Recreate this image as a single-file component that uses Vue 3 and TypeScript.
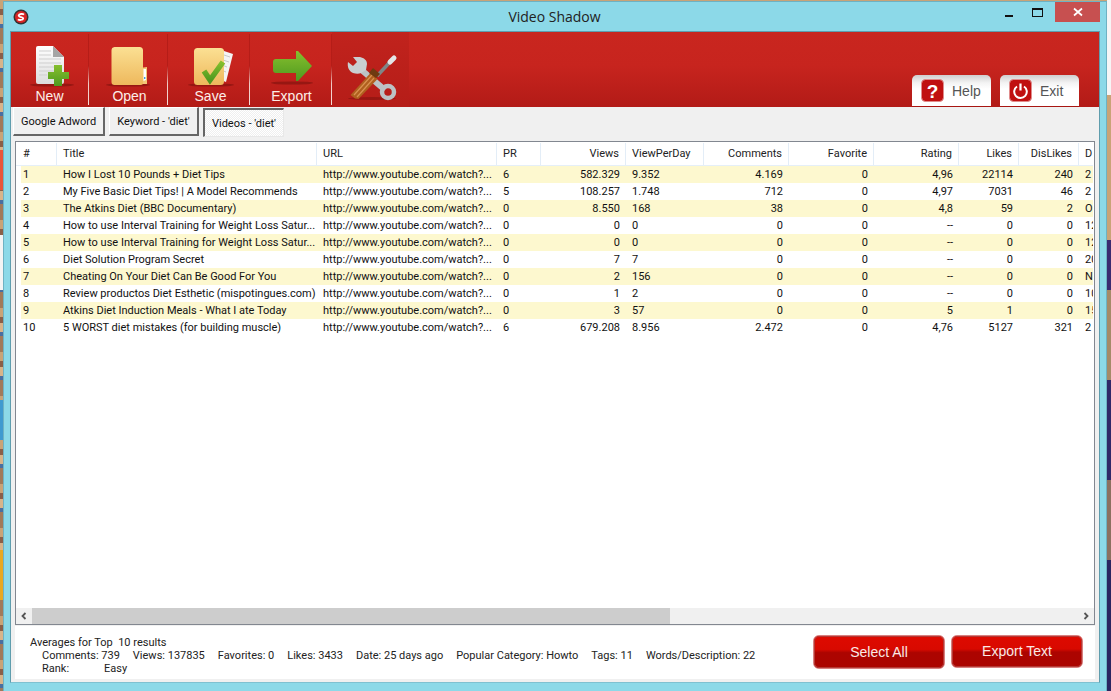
<script setup lang="ts">
interface Row {
  n: number; title: string; pr: number; views: string; vpd: string; comments: string;
  fav: string; rating: string; likes: string; dislikes: string; d: string;
}
const url = 'http://www.youtube.com/watch?...'
const rows: Row[] = [
  { n: 1, title: 'How I Lost 10 Pounds + Diet Tips', pr: 6, views: '582.329', vpd: '9.352', comments: '4.169', fav: '0', rating: '4,96', likes: '22114', dislikes: '240', d: '2' },
  { n: 2, title: 'My Five Basic Diet Tips! | A Model Recommends', pr: 5, views: '108.257', vpd: '1.748', comments: '712', fav: '0', rating: '4,97', likes: '7031', dislikes: '46', d: '2' },
  { n: 3, title: 'The Atkins Diet (BBC Documentary)', pr: 0, views: '8.550', vpd: '168', comments: '38', fav: '0', rating: '4,8', likes: '59', dislikes: '2', d: 'O' },
  { n: 4, title: 'How to use Interval Training for Weight Loss Satur...', pr: 0, views: '0', vpd: '0', comments: '0', fav: '0', rating: '--', likes: '0', dislikes: '0', d: '12' },
  { n: 5, title: 'How to use Interval Training for Weight Loss Satur...', pr: 0, views: '0', vpd: '0', comments: '0', fav: '0', rating: '--', likes: '0', dislikes: '0', d: '12' },
  { n: 6, title: 'Diet Solution Program Secret', pr: 0, views: '7', vpd: '7', comments: '0', fav: '0', rating: '--', likes: '0', dislikes: '0', d: '20' },
  { n: 7, title: 'Cheating On Your Diet Can Be Good For You', pr: 0, views: '2', vpd: '156', comments: '0', fav: '0', rating: '--', likes: '0', dislikes: '0', d: 'N' },
  { n: 8, title: 'Review productos Diet Esthetic (mispotingues.com)', pr: 0, views: '1', vpd: '2', comments: '0', fav: '0', rating: '--', likes: '0', dislikes: '0', d: '10' },
  { n: 9, title: 'Atkins Diet Induction Meals - What I ate Today', pr: 0, views: '3', vpd: '57', comments: '0', fav: '0', rating: '5', likes: '1', dislikes: '0', d: '15' },
  { n: 10, title: '5 WORST diet mistakes (for building muscle)', pr: 6, views: '679.208', vpd: '8.956', comments: '2.472', fav: '0', rating: '4,76', likes: '5127', dislikes: '321', d: '2' },
]
</script>

<template>
  <div class="desktop">
    <div class="window">
      <div class="titlebar">
        <svg class="app-icon" width="16" height="16" viewBox="0 0 16 16">
          <circle cx="8" cy="8" r="7.5" fill="#333" />
          <circle cx="8" cy="8" r="6" fill="#d92525" />
          <path d="M11 5.600C10 4.700 6 4.600 5.700 6.500c-.3 2 4.800 1.200 4.500 3.100-.3 1.800-4.300 1.600-5.300.7" fill="none" stroke="#fff" stroke-width="1.800" />
        </svg>
        <span class="title">Video Shadow</span>
        <div class="controls">
          <span class="ctl-min"></span>
          <span class="ctl-max"></span>
          <span class="ctl-close">
            <svg width="10" height="10" viewBox="0 0 10 10"><path d="M1 1.500l8 7M9 1.500l-8 7" stroke="#fff" stroke-width="1.700" /></svg>
          </span>
        </div>
      </div>

      <div class="client">
        <header class="ribbon">
          <div class="tools">
            <button class="tool tool-new">
              <svg width="78" height="44" viewBox="11 44 78 44">
                <defs>
                  <linearGradient id="pg" x1="0" y1="0" x2="0" y2="1"><stop offset="0" stop-color="#fff"/><stop offset="1" stop-color="#dcdcdc"/></linearGradient>
                  <linearGradient id="gg" x1="0" y1="0" x2="0" y2="1"><stop offset="0" stop-color="#86bf2e"/><stop offset="1" stop-color="#4f9a1f"/></linearGradient>
                  <linearGradient id="fg" x1="0" y1="0" x2="0" y2="1"><stop offset="0" stop-color="#fbe093"/><stop offset="1" stop-color="#eeb85c"/></linearGradient>
                </defs>
                <ellipse cx="52" cy="85" rx="22" ry="1.600" fill="#8a1410" opacity=".75"/>
                <path d="M38 46h15l11 11v25a2 2 0 0 1-2 2H38a2 2 0 0 1-2-2V48a2 2 0 0 1 2-2z" fill="url(#pg)"/>
                <path d="M53 46l11 11H53z" fill="#a5a5a5"/>
                <path d="M39 51h12M39 55h12M39 59h22M39 63h22M39 67h22M39 71h22M39 75h8" stroke="#cfcfcf" stroke-width="1"/>
                <path d="M54 65h8v7h7v7h-7v7h-8v-7h-6v-7h6z" fill="url(#gg)"/>
              </svg>
              <span>New</span>
            </button>
            <button class="tool tool-open">
              <svg width="79" height="44" viewBox="89 44 79 44">
                <ellipse cx="128" cy="85" rx="22" ry="1.600" fill="#8a1410" opacity=".75"/>
                <path d="M140 68l7-1v17h-7z" fill="#f3c878"/>
                <path d="M143.500 69h2.500v11l-2.500 1z" fill="#fff"/>
                <path d="M114.500 47h25a3.500 3.500 0 0 1 3.500 3.500V83a2 2 0 0 1-2 2h-26.500a3 3 0 0 1-3-3V50.500a3.500 3.500 0 0 1 3-3.500z" fill="url(#fg)"/>
                <rect x="144" y="77" width="1.400" height="2" fill="#3e9be0"/>
              </svg>
              <span>Open</span>
            </button>
            <button class="tool tool-save">
              <svg width="82" height="44" viewBox="168 44 82 44">
                <ellipse cx="211" cy="85" rx="23" ry="1.600" fill="#8a1410" opacity=".75"/>
                <path d="M224 51l9 3-7 28-5-2z" fill="#f4f4f4"/>
                <path d="M224 55l6 2M223 60l6 2M222 65l5 2M221 70l5 2" stroke="#c8c8c8" stroke-width="1"/>
                <rect x="194" y="48" width="30" height="37" rx="3.500" fill="url(#fg)"/>
                <path d="M204 71l6 9 13-18" fill="none" stroke="url(#gg)" stroke-width="5.500"/>
              </svg>
              <span>Save</span>
            </button>
            <button class="tool tool-export">
              <svg width="82" height="44" viewBox="250 44 82 44">
                <ellipse cx="292" cy="83" rx="21" ry="1.600" fill="#8a1410" opacity=".75"/>
                <path d="M276 59h20v-8l2 0 14 15-14 15h-2v-8h-20a3 3 0 0 1-3-3V62a3 3 0 0 1 3-3z" fill="url(#gg)"/>
              </svg>
              <span>Export</span>
            </button>
            <button class="tool tool-wrench">
              <svg width="77" height="64" viewBox="332 44 77 64">
                <ellipse cx="372" cy="98.500" rx="24" ry="1.400" fill="#8a1410" opacity=".7"/>
                <path d="M358 67l27 23" fill="none" stroke="#bcc3c5" stroke-width="6"/>
                <path d="M360 57l-7 0 4 5-4 4-5-4c-1 5 1 9 5 11 3 1 6 1 8 0l5-3 1-6c0-4-3-6-7-7z" fill="#c9cfd1"/>
                <circle cx="388" cy="92" r="6" fill="none" stroke="#bcc2c4" stroke-width="4.500"/>
                <path d="M377 76l14-15" stroke="#7f8688" stroke-width="3.500"/>
                <path d="M390 62l4-4" stroke="#e3e6e7" stroke-width="5" stroke-linecap="round"/>
                <path d="M355 98.500l-4.500-3.500 20-22 7 6-19 20z" fill="#b0601f"/>
                <path d="M354 95l18-20M357 97l17-19" stroke="#d99250" stroke-width="1.200"/>
                <path d="M369 73l4-5 7 6-4 4z" fill="#6f3a10"/>
              </svg>
            </button>
          </div>
          <div class="top-actions">
            <button class="top-btn">
              <span class="badge">
                <svg width="23" height="23" viewBox="0 0 23 23"><rect x=".5" y=".5" width="22" height="22" rx="4" fill="#c01010" stroke="#e08c8c"/><text x="11.500" y="18.500" text-anchor="middle" class="q">?</text></svg>
              </span>
              <span>Help</span>
            </button>
            <button class="top-btn">
              <span class="badge">
                <svg width="23" height="23" viewBox="0 0 23 23"><rect x=".5" y=".5" width="22" height="22" rx="4" fill="#c01010" stroke="#e08c8c"/><path d="M8 7.500a6.300 6.300 0 1 0 7 0" fill="none" stroke="#fff" stroke-width="2"/><path d="M11.500 4.500v7" stroke="#fff" stroke-width="2.200"/></svg>
              </span>
              <span>Exit</span>
            </button>
          </div>
        </header>

        <nav class="tabs">
          <button class="tab tab-a">Google Adword</button>
          <button class="tab tab-b">Keyword - 'diet'</button>
          <button class="tab active">Videos - 'diet'</button>
        </nav>

        <section class="list">
          <div class="grid-wrap">
            <div class="row head">
              <div class="l">#</div><div class="l">Title</div><div class="l">URL</div><div class="l">PR</div>
              <div class="r">Views</div><div class="l">ViewPerDay</div><div class="r">Comments</div>
              <div class="r">Favorite</div><div class="r">Rating</div><div class="r">Likes</div>
              <div class="r">DisLikes</div><div class="l">D</div>
            </div>
            <div v-for="row in rows" :key="row.n" class="row body">
              <div class="l">{{ row.n }}</div><div class="l">{{ row.title }}</div><div class="l">{{ url }}</div>
              <div class="l">{{ row.pr }}</div><div class="r">{{ row.views }}</div><div class="l">{{ row.vpd }}</div>
              <div class="r">{{ row.comments }}</div><div class="r">{{ row.fav }}</div><div class="r">{{ row.rating }}</div>
              <div class="r">{{ row.likes }}</div><div class="r">{{ row.dislikes }}</div><div class="l">{{ row.d }}</div>
            </div>
          </div>
          <div class="hscroll">
            <span class="arrow"><svg width="8" height="8" viewBox="0 0 8 8"><path d="M5.500 1L2.500 4l3 3" fill="none" stroke="#555" stroke-width="1.800"/></svg></span>
            <div class="track"><div class="thumb"></div></div>
            <span class="arrow"><svg width="8" height="8" viewBox="0 0 8 8"><path d="M2.500 1l3 3-3 3" fill="none" stroke="#555" stroke-width="1.800"/></svg></span>
          </div>
        </section>

        <footer class="status">
          <div class="summary">
            <div>Averages for Top&nbsp; 10 results</div>
            <div class="stats">
              <span>Comments: 739</span><span>Views: 137835</span><span>Favorites: 0</span><span>Likes: 3433</span>
              <span>Date: 25 days ago</span><span>Popular Category: Howto</span><span>Tags: 11</span><span>Words/Description: 22</span>
            </div>
            <div class="rank"><span class="rank-k">Rank:</span><span>Easy</span></div>
          </div>
          <div class="actions">
            <button class="red-btn">Select All</button>
            <button class="red-btn second">Export Text</button>
          </div>
        </footer>
      </div>
    </div>
  </div>
</template>

<style>
html, body { margin: 0; padding: 0; background: #8a6a4a; }
</style>

<style scoped>
.desktop {
  width: 1111px; height: 691px; overflow: hidden; box-sizing: border-box;
  padding: 1px 3px 0 3px;
  font-family: Roboto, "Liberation Sans", Arial, sans-serif;
  background:
    linear-gradient(180deg, #f6f6f6 0 95px, #c9a377 95px 240px, #3a2a70 240px 290px, #a58a68 290px 380px, #2f2868 380px 480px, #8b7060 480px 560px, #2a2560 560px) right top / 4px 100% no-repeat,
    linear-gradient(180deg, transparent 0 150px, #e8553a 150px 190px, transparent 190px 235px, #f4f4f4 235px 290px, transparent 290px 400px, #3f9ad0 400px 440px, transparent 440px 550px, #e8a820 550px 600px, transparent 600px) left top / 3px 100% no-repeat,
    repeating-linear-gradient(180deg, #c9a377 0 9px, #8a5f48 9px 15px, #d8b48a 15px 24px, #4a6fa0 24px 28px, #a17a5a 28px 44px);
}
.window {
  width: 1104px; height: 690px; box-sizing: border-box;
  background: #8cd9e8; border: 1px solid #6eb2c3; border-bottom: 0;
  display: flex; flex-direction: column; padding: 0 6px 8px 6px;
}
.titlebar { height: 29px; flex: none; position: relative; display: flex; align-items: center; margin: 0 -6px; }
.app-icon { position: absolute; left: 9px; top: 7px; }
.title { flex: 1; text-align: center; font: 14px "Open Sans", sans-serif; color: #222; margin-top: -1px; margin-right: 1px; }
.controls { position: absolute; right: 6px; top: 0; height: 20px; display: flex; align-items: flex-start; }
.ctl-min { width: 8px; height: 2px; background: #111; margin: 13px 19px 0 0; }
.ctl-max { width: 9px; height: 6px; border: 1px solid #111; border-top-width: 2px; margin: 6px 12px 0 0; }
.ctl-close { width: 45px; height: 20px; background: #c75050; display: flex; align-items: center; justify-content: center; }
.client {
  flex: 1; display: flex; flex-direction: column; background: #f0f0f0;
  border: 1px solid #5f9dad; border-bottom-color: #7fc1d1; min-height: 0;
}
.ribbon {
  height: 75px; flex: none; display: flex; justify-content: space-between;
  background: linear-gradient(180deg, #c9261f 0%, #c7241e 45%, #b21b17 100%);
}
.tools { display: flex; height: 75px; }
.tool {
  all: unset; box-sizing: border-box; height: 75px; padding-top: 12px;
  display: flex; flex-direction: column; align-items: center;
  font-family: "Liberation Sans", Arial, sans-serif;
  color: #fdeee8; font-size: 14px; line-height: 16px; position: relative;
}
.tool svg { display: block; flex: none; }
.tool::after {
  content: ""; position: absolute; right: 0; top: 2px; bottom: 2px; width: 1px;
  background: linear-gradient(180deg, #b51d18 0%, #b51d18 45%, #f0c9c4 70%, #f6dcd8 100%);
}
.tool-new { width: 78px; }
.tool-open { width: 79px; }
.tool-save { width: 82px; }
.tool-export { width: 82px; }
.tool-new span { margin-right: 1px; }
.tool-open span { margin-left: 2px; }
.tool-save span { margin-left: 3px; }
.tool-export span { margin-left: 1px; }
.tool-wrench { width: 77px; background: linear-gradient(180deg, #c1231d, #b51d18); }
.tool-wrench::after { display: none; }
.top-actions { display: flex; gap: 9px; padding: 43px 20px 0 0; }
.top-btn {
  all: unset; box-sizing: border-box; width: 79px; height: 32px; display: flex; align-items: center;
  gap: 8px; padding: 0 0 0 9px; border-radius: 5px 5px 0 0; border-bottom: 1px solid #a81612;
  background: linear-gradient(180deg, #cfcfcf 0%, #f3f3f3 25%, #fff 45%, #fff 100%);
  font-family: "Liberation Sans", Arial, sans-serif;
  color: #555; font-size: 14px;
}
.badge { display: block; height: 23px; }
.q { font: bold 19px "Liberation Sans", sans-serif; fill: #fff; }
.tabs { height: 34px; flex: none; display: flex; padding-left: 2px; box-sizing: border-box; }
.tab {
  all: unset; box-sizing: border-box; height: 29px; display: flex; align-items: center; justify-content: center;
  font-size: 11px; color: #111; background: #f0f0f0;
  border: 1px solid; border-color: #fff #666 #666 #fff; border-width: 1px 2px 2px 1px; margin-right: 4px;
}
.tab-a { width: 92px; }
.tab-b { width: 90px; }
.active {
  width: 81px; margin-top: 1px; border-color: #666 #e8e8e8 #e8e8e8 #666; border-width: 2px 1px 1px 2px;
  background: repeating-conic-gradient(#fff 0 25%, #efefef 0 50%) 0 0 / 2px 2px;
}
.list {
  margin: 0 4px; height: 484px; flex: none; box-sizing: border-box; background: #fff;
  border: 1px solid #828790; display: flex; flex-direction: column;
}
.grid-wrap { flex: 1; padding: 1px 1px 0 5px; overflow: hidden; font-size: 11px; color: #111; }
.row { display: grid; grid-template-columns: 36px 260px 180px 44px 85px 78px 85px 85px 85px 60px 60px 14px; }
.row > div { white-space: nowrap; overflow: hidden; box-sizing: border-box; }
.l { padding-left: 6px; }
.row > .l:first-child { padding-left: 2px; }
.r { text-align: right; padding-right: 6px; }
.head { height: 23px; margin-left: -5px; grid-template-columns: 41px 260px 180px 44px 85px 78px 85px 85px 85px 60px 60px 14px; color: #222; border-bottom: 1px solid #e5eff8; box-sizing: border-box; }
.head > div { line-height: 22px; border-right: 1px solid #e3edf7; }
.head > .l:first-child { padding-left: 7px; }
.head > div:last-child { border-right: 0; }
.body { height: 17px; line-height: 17px; }
.body:nth-child(even) { background: #fdf8cf; }
.hscroll { height: 16px; flex: none; display: flex; background: #f0f0f0; }
.arrow { width: 16px; flex: none; display: flex; align-items: center; justify-content: center; }
.track { flex: 1; }
.thumb { width: 638px; height: 100%; background: #cdcdcd; }
.status {
  flex: 1; margin: 1px 4px 3px 4px; background: #fff; display: flex; justify-content: space-between;
  font-size: 11px; color: #222; padding: 10px 12px 0 15px; min-height: 0;
}
.summary { line-height: 13px; }
.stats { display: flex; gap: 13px; padding-left: 12px; }
.rank { padding-left: 12px; display: flex; }
.rank-k { width: 62px; }
.actions { display: flex; gap: 6px; margin-top: -1px; align-items: flex-start; }
.red-btn {
  all: unset; box-sizing: border-box; width: 132px; height: 34px; text-align: center; color: #fbe9e6; font-size: 14px; line-height: 31px;
  font-family: "Liberation Sans", Arial, sans-serif;
  border-radius: 6px; border: 1px solid #d98080; outline: 1px solid #b53a36; outline-offset: -2px;
  background: linear-gradient(180deg, #de0a00 0%, #d80900 42%, #ac0400 52%, #ab0400 100%);
}
.second { height: 33px; line-height: 29px; }
</style>
